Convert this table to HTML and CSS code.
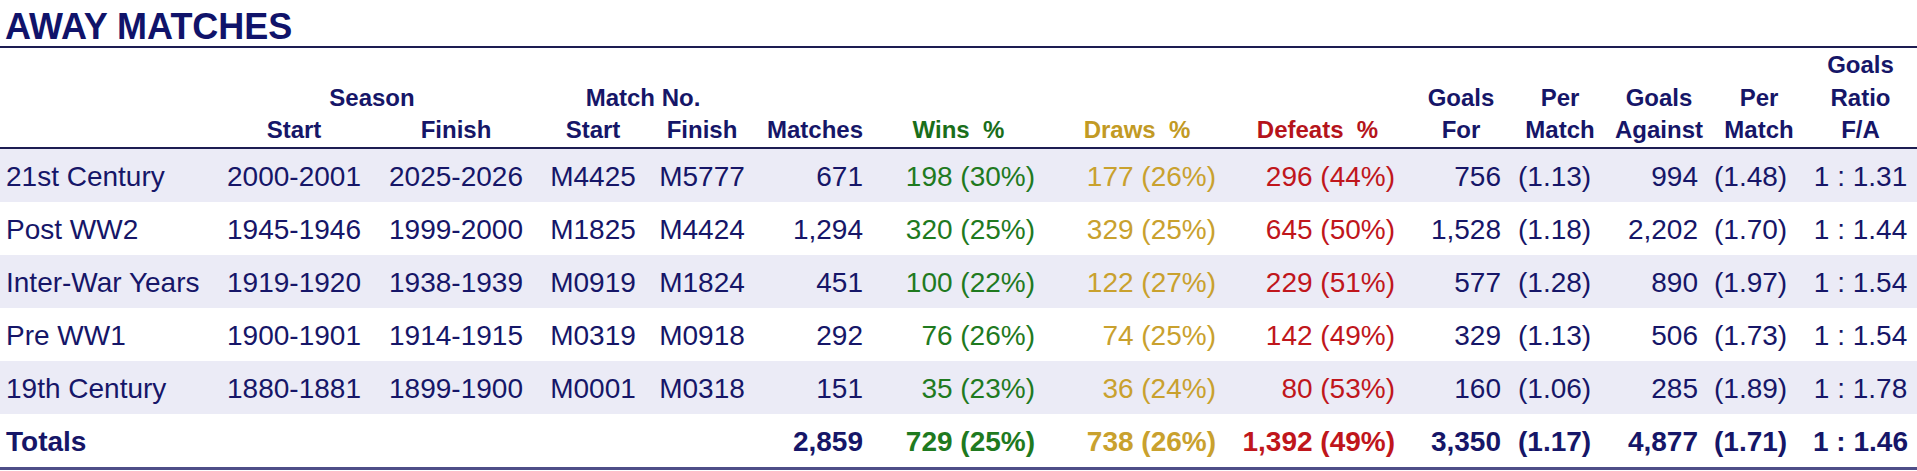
FILE: index.html
```html
<!DOCTYPE html>
<html lang="en">
<head>
<meta charset="utf-8">
<title>Away Matches</title>
<link rel="stylesheet" href="styles.css">
</head>
<body>
<div class="title">AWAY MATCHES</div>
<table class="stats">
  <colgroup>
    <col class="k1"><col class="k2"><col class="k3"><col class="k4"><col class="k5"><col class="k6"><col class="k7">
    <col class="k8"><col class="k9"><col class="k10"><col class="k11"><col class="k12"><col class="k13"><col class="k14">
  </colgroup>
  <thead>
    <tr class="h1">
      <th colspan="13"></th>
      <th>Goals</th>
    </tr>
    <tr class="h2">
      <th></th>
      <th colspan="2">Season</th>
      <th colspan="2">Match No.</th>
      <th></th><th></th><th></th><th></th>
      <th>Goals</th>
      <th>Per</th>
      <th>Goals</th>
      <th>Per</th>
      <th>Ratio</th>
    </tr>
    <tr class="h3">
      <th></th>
      <th>Start</th>
      <th>Finish</th>
      <th>Start</th>
      <th>Finish</th>
      <th class="mt">Matches</th>
      <th class="win">Wins&nbsp;&nbsp;%</th>
      <th class="draw">Draws&nbsp;&nbsp;%</th>
      <th class="loss">Defeats&nbsp;&nbsp;%</th>
      <th>For</th>
      <th>Match</th>
      <th>Against</th>
      <th>Match</th>
      <th>F/A</th>
    </tr>
  </thead>
  <tbody>
    <tr class="band">
      <td class="lbl">21st Century</td><td class="c">2000-2001</td><td class="c">2025-2026</td><td class="c">M4425</td><td class="c">M5777</td>
      <td class="mt">671</td><td class="wn win">198 (30%)</td><td class="dr draw">177 (26%)</td><td class="df loss">296 (44%)</td>
      <td class="gf">756</td><td class="pm1">(1.13)</td><td class="ga">994</td><td class="pm2">(1.48)</td><td class="c">1 : 1.31</td>
    </tr>
    <tr>
      <td class="lbl">Post WW2</td><td class="c">1945-1946</td><td class="c">1999-2000</td><td class="c">M1825</td><td class="c">M4424</td>
      <td class="mt">1,294</td><td class="wn win">320 (25%)</td><td class="dr draw">329 (25%)</td><td class="df loss">645 (50%)</td>
      <td class="gf">1,528</td><td class="pm1">(1.18)</td><td class="ga">2,202</td><td class="pm2">(1.70)</td><td class="c">1 : 1.44</td>
    </tr>
    <tr class="band">
      <td class="lbl">Inter-War Years</td><td class="c">1919-1920</td><td class="c">1938-1939</td><td class="c">M0919</td><td class="c">M1824</td>
      <td class="mt">451</td><td class="wn win">100 (22%)</td><td class="dr draw">122 (27%)</td><td class="df loss">229 (51%)</td>
      <td class="gf">577</td><td class="pm1">(1.28)</td><td class="ga">890</td><td class="pm2">(1.97)</td><td class="c">1 : 1.54</td>
    </tr>
    <tr>
      <td class="lbl">Pre WW1</td><td class="c">1900-1901</td><td class="c">1914-1915</td><td class="c">M0319</td><td class="c">M0918</td>
      <td class="mt">292</td><td class="wn win">76 (26%)</td><td class="dr draw">74 (25%)</td><td class="df loss">142 (49%)</td>
      <td class="gf">329</td><td class="pm1">(1.13)</td><td class="ga">506</td><td class="pm2">(1.73)</td><td class="c">1 : 1.54</td>
    </tr>
    <tr class="band">
      <td class="lbl">19th Century</td><td class="c">1880-1881</td><td class="c">1899-1900</td><td class="c">M0001</td><td class="c">M0318</td>
      <td class="mt">151</td><td class="wn win">35 (23%)</td><td class="dr draw">36 (24%)</td><td class="df loss">80 (53%)</td>
      <td class="gf">160</td><td class="pm1">(1.06)</td><td class="ga">285</td><td class="pm2">(1.89)</td><td class="c">1 : 1.78</td>
    </tr>
    <tr class="total">
      <td class="lbl">Totals</td><td></td><td></td><td></td><td></td>
      <td class="mt">2,859</td><td class="wn win">729 (25%)</td><td class="dr draw">738 (26%)</td><td class="df loss">1,392 (49%)</td>
      <td class="gf">3,350</td><td class="pm1">(1.17)</td><td class="ga">4,877</td><td class="pm2">(1.71)</td><td class="c">1 : 1.46</td>
    </tr>
  </tbody>
</table>
</body>
</html>
```
FILE: styles.css
```css
body {
  margin: 0;
  background: #ffffff;
  color: #161668;
  font-family: "Liberation Sans", Arial, sans-serif;
}

.title {
  height: 39px;
  padding: 7px 0 0 5px;
  font-size: 36px;
  line-height: 39px;
  font-weight: bold;
  color: #10136a;
  border-bottom: 2px solid #1d1d52;
}

.stats {
  width: 1917px;
  border-collapse: collapse;
  table-layout: fixed;
}

.k1 { width: 210px; }
.k2 { width: 168px; }
.k3 { width: 156px; }
.k4 { width: 118px; }
.k5 { width: 100px; }
.k6 { width: 120px; }
.k7 { width: 173px; }
.k8 { width: 184px; }
.k9 { width: 177px; }
.k10 { width: 110px; }
.k11 { width: 88px; }
.k12 { width: 110px; }
.k13 { width: 90px; }
.k14 { width: 113px; }

thead th {
  padding: 0;
  font-size: 24px;
  line-height: 32.5px;
  height: 32.5px;
  font-weight: bold;
  text-align: center;
  white-space: nowrap;
  vertical-align: bottom;
}

thead .h1 th {
  height: 33.5px;
}

thead .h3 th {
  border-bottom: 2px solid #1d1d52;
}

thead th.mt {
  text-align: right;
  padding-right: 9px;
}

tbody td {
  padding: 3px 0 0 0;
  height: 50px;
  font-size: 28px;
  line-height: 50px;
  white-space: nowrap;
}

tbody .band td {
  background: #ebebf6;
}

tbody .total td {
  font-weight: bold;
  border-bottom: 3px solid #4e4e88;
}

.lbl { text-align: left; padding-left: 6px; }
.c { text-align: center; }
td.mt { text-align: right; padding-right: 9px; }
.wn { text-align: right; padding-right: 10px; }
.dr { text-align: right; padding-right: 13px; }
.df { text-align: right; padding-right: 11px; }
.gf { text-align: right; padding-right: 15px; }
.pm1 { text-align: left; padding-left: 2px; }
.ga { text-align: right; padding-right: 16px; }
.pm2 { text-align: left; padding-left: 0; }

.win { color: #1f7a1f; }
.draw { color: #c9a12e; }
.loss { color: #c0161c; }

th.win { color: #1a6e1a; }
th.draw { color: #c29a24; }
th.loss { color: #b5141b; }
```
